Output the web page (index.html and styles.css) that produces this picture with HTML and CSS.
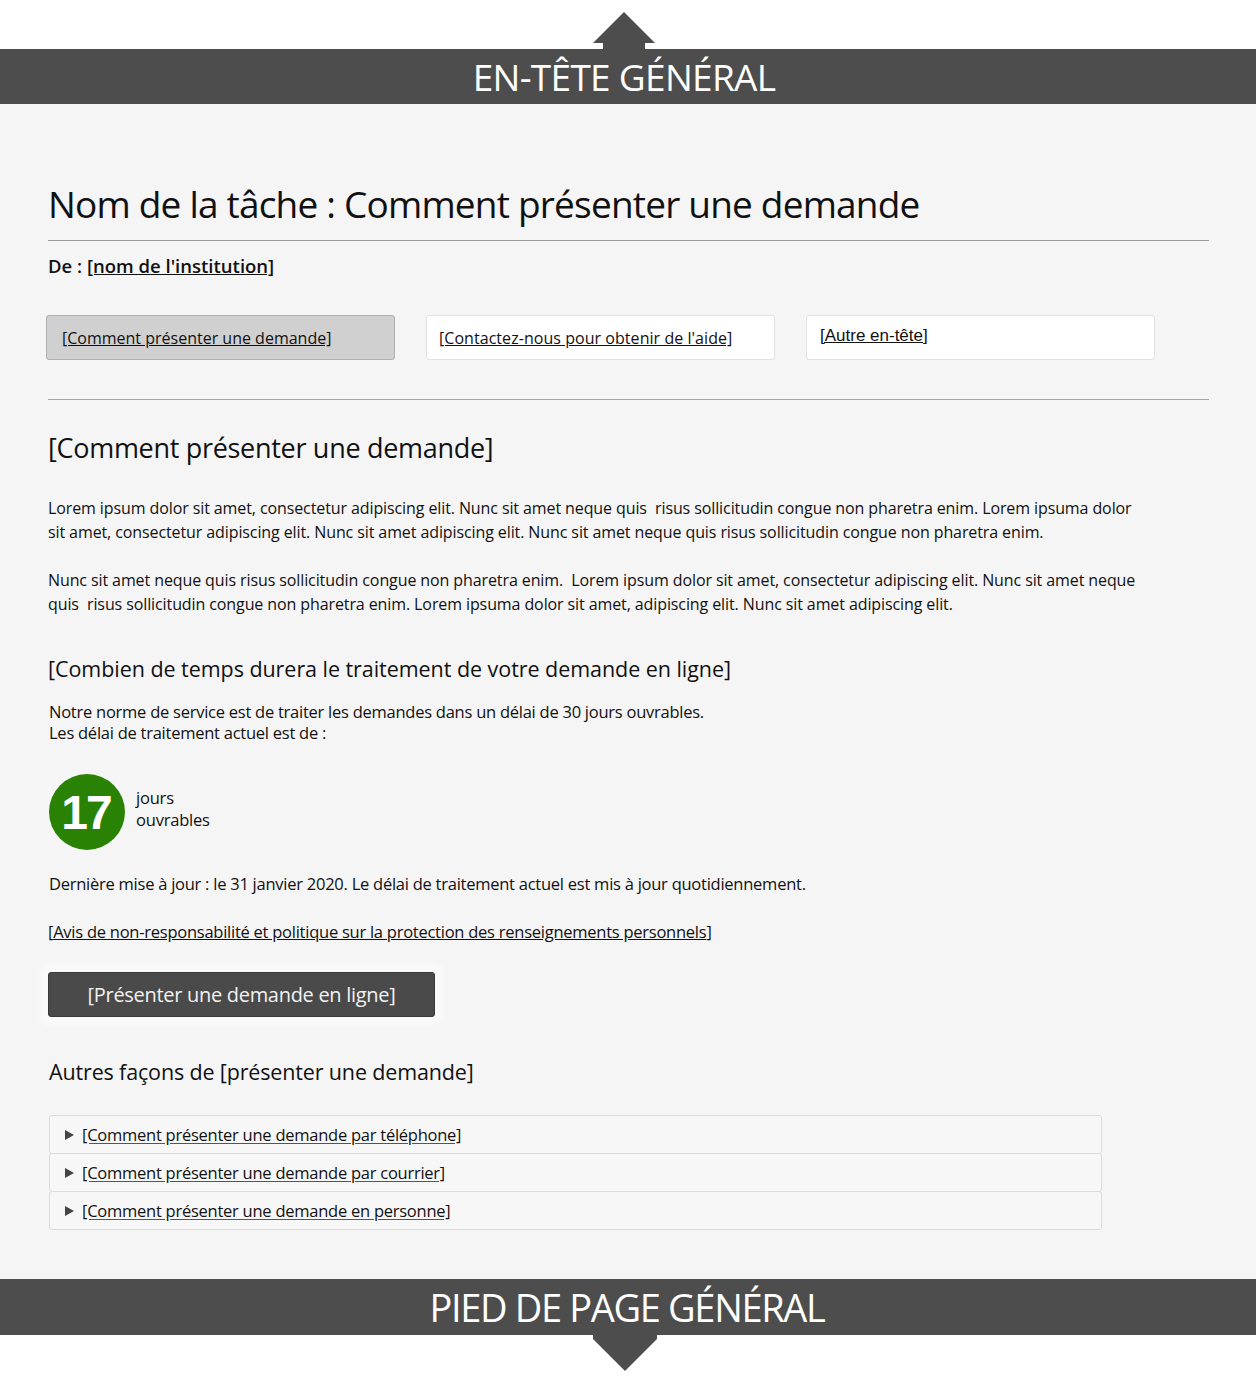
FILE: index.html
```html
<!DOCTYPE html>
<html lang="fr">
<head>
<meta charset="utf-8">
<title>Comment présenter une demande</title>
<link rel="stylesheet" href="styles.css">
</head>
<body>
<header class="site-header">
  <div class="arrow-up">
    <svg width="62" height="37" viewBox="0 0 62 37" aria-hidden="true">
      <polygon points="0,31 31,0 62,31 52,31 52,37 10,37 10,31" fill="#4d4d4d"/>
    </svg>
  </div>
  <div class="bar bar-top">EN-TÊTE GÉNÉRAL</div>
</header>

<main class="main">
  <h1 class="title">Nom de la tâche : Comment présenter une demande</h1>
  <p class="from">De : <a href="#">[nom de l'institution]</a></p>

  <nav class="tabs">
    <a class="tab active" href="#">[Comment présenter une demande]</a>
    <a class="tab tab-condensed" href="#">[Contactez-nous pour obtenir de l'aide]</a>
    <a class="tab tab-arial" href="#">[Autre en-tête]</a>
  </nav>

  <hr class="rule">

  <h2 class="section-title">[Comment présenter une demande]</h2>
  <p class="para">Lorem ipsum dolor sit amet, consectetur adipiscing elit. Nunc sit amet neque quis&nbsp; risus sollicitudin congue non pharetra enim. Lorem ipsuma dolor sit amet, consectetur adipiscing elit. Nunc sit amet adipiscing elit. Nunc sit amet neque quis risus sollicitudin congue non pharetra enim.</p>
  <p class="para">Nunc sit amet neque quis risus sollicitudin congue non pharetra enim.&nbsp; Lorem ipsum dolor sit amet, consectetur adipiscing elit. Nunc sit amet neque quis&nbsp; risus sollicitudin congue non pharetra enim. Lorem ipsuma dolor sit amet, adipiscing elit. Nunc sit amet adipiscing elit.</p>

  <h3 class="sub-title">[Combien de temps durera le traitement de votre demande en ligne]</h3>
  <p class="norm">Notre norme de service est de traiter les demandes dans un délai de 30 jours ouvrables.<br>Les délai de traitement actuel est de :</p>

  <div class="days">
    <div class="circle">17</div>
    <div class="days-label">jours<br>ouvrables</div>
  </div>

  <p class="updated">Dernière mise à jour : le 31 janvier 2020. Le délai de traitement actuel est mis à jour quotidiennement.</p>
  <p class="notice">[<a href="#">Avis de non-responsabilité et politique sur la protection des renseignements personnels</a>]</p>

  <div class="btn-wrap"><a class="btn" href="#">[Présenter une demande en ligne]</a></div>

  <h3 class="sub-title other">Autres façons de [présenter une demande]</h3>
  <div class="accordion">
    <div class="acc-row"><svg class="tri" width="9" height="10" viewBox="0 0 9 10" aria-hidden="true"><polygon points="0,0 9,5 0,10" fill="#444"/></svg><a href="#">[Comment présenter une demande par téléphone]</a></div>
    <div class="acc-row"><svg class="tri" width="9" height="10" viewBox="0 0 9 10" aria-hidden="true"><polygon points="0,0 9,5 0,10" fill="#444"/></svg><a href="#">[Comment présenter une demande par courrier]</a></div>
    <div class="acc-row"><svg class="tri" width="9" height="10" viewBox="0 0 9 10" aria-hidden="true"><polygon points="0,0 9,5 0,10" fill="#444"/></svg><a href="#">[Comment présenter une demande en personne]</a></div>
  </div>
</main>

<footer class="site-footer">
  <div class="bar bar-bottom">PIED DE PAGE GÉNÉRAL</div>
  <div class="arrow-down">
    <svg width="64" height="36" viewBox="0 0 64 36" aria-hidden="true">
      <polygon points="0,0 64,0 64,4 32,36 0,4" fill="#4d4d4d"/>
    </svg>
  </div>
</footer>
</body>
</html>
```

FILE: styles.css
```css
* { box-sizing: border-box; }
html, body { margin: 0; padding: 0; background: #ffffff; }
body {
  font-family: "Open Sans", "Noto Sans", sans-serif;
  color: #111111;
}
a { color: #111111; text-decoration: underline; }

.site-header { background: #ffffff; }
.arrow-up { height: 49px; padding: 12px 8px 0 0; display: flex; justify-content: center; }
.arrow-up svg { display: block; }
.bar {
  background: #4d4d4d;
  color: #ffffff;
  height: 55px;
  display: flex;
  align-items: center;
  justify-content: center;
  font-size: 37px;
  letter-spacing: -0.7px;
  font-weight: 400;
}
.bar-top { padding-right: 8px; }
.bar-bottom { height: 56px; font-size: 38px; letter-spacing: -1.35px; padding-right: 2px; }
.arrow-down { height: 46px; padding-right: 7px; display: flex; justify-content: center; }
.arrow-down svg { display: block; }

.main {
  background: #f5f5f5;
  padding: 76px 47px 49px 48px;
}
.title {
  margin: 0;
  font-size: 37px;
  font-weight: 400;
  line-height: 48px;
  letter-spacing: -0.8px;
  padding-bottom: 12px;
  border-bottom: 1px solid #9a9a9a;
  color: #111;
}
.from {
  margin: 13px 0 0;
  font-size: 18.5px;
  line-height: 24px;
  font-weight: 600;
  letter-spacing: 0;
}
.tabs {
  margin: 37px 0 0 -2px;
  display: flex;
  gap: 31px;
}
.tab {
  width: 349px;
  height: 45px;
  display: flex;
  align-items: center;
  padding-left: 15px;
  background: #ffffff;
  border: 1px solid #e2e2e2;
  border-radius: 3px;
  font-size: 16px;
  letter-spacing: 0;
  color: #111;
}
.tab.active { background: #d0d0d0; border-color: #b0b0b0; }
.tab-condensed { padding-left: 12px; letter-spacing: 0.05px; }
.tab-arial { font-family: "Liberation Sans", Arial, sans-serif; font-size: 17px; letter-spacing: 0; padding-left: 13px; padding-bottom: 4px; }

.rule { margin: 39px 0 0; border: 0; border-top: 1px solid #a6a6a6; height: 0; }

.section-title {
  margin: 30px 0 0;
  font-size: 27px;
  line-height: 36px;
  font-weight: 400;
  letter-spacing: -0.3px;
}
.para {
  margin: 30px 0 0;
  max-width: 1100px;
  font-size: 16px;
  line-height: 24px;
  letter-spacing: -0.1px;
}
.para + .para { margin-top: 24px; }

.sub-title {
  margin: 38px 0 0;
  font-size: 21.5px;
  line-height: 30px;
  font-weight: 400;
  letter-spacing: -0.05px;
}
.norm {
  margin: 17px 0 0 1px;
  font-size: 16.5px;
  line-height: 21px;
  letter-spacing: -0.25px;
}
.days {
  margin: 31px 0 0 1px;
  display: flex;
  align-items: flex-start;
  gap: 11px;
}
.circle {
  width: 76px;
  height: 76px;
  border-radius: 50%;
  background: #2a8204;
  color: #ffffff;
  font-family: "Liberation Sans", Arial, sans-serif;
  font-weight: 700;
  font-size: 48px;
  letter-spacing: -2px;
  display: flex;
  align-items: center;
  justify-content: center;
  padding-right: 2px;
}
.days-label {
  padding-top: 13px;
  font-size: 16.5px;
  line-height: 22px;
  letter-spacing: -0.2px;
}
.updated {
  margin: 22px 0 0 1px;
  font-size: 16.5px;
  line-height: 24px;
  letter-spacing: -0.25px;
}
.notice {
  margin: 24px 0 0;
  font-size: 16.5px;
  line-height: 24px;
  letter-spacing: -0.25px;
}
.btn-wrap { margin-top: 28px; display: flex; }
.btn {
  width: 387px;
  height: 45px;
  display: flex;
  align-items: center;
  justify-content: center;
  background: #4a4a4a;
  color: #f2f2f2;
  text-decoration: none;
  border-radius: 3px;
  border: 1px solid #3a3a3a;
  font-size: 20px;
  letter-spacing: -0.3px;
  box-shadow: 0 0 6px 8px rgba(255, 255, 255, 0.55);
}
.sub-title.other { margin-top: 40px; margin-left: 1px; letter-spacing: -0.15px; }
.accordion {
  margin: 28px 0 0 1px;
  width: 1053px;
}
.acc-row {
  height: 39px;
  display: flex;
  align-items: center;
  padding-left: 15px;
  background: #f7f7f7;
  border: 1px solid #dcdcdc;
  border-radius: 3px;
  font-size: 16.5px;
  letter-spacing: -0.25px;
}
.acc-row + .acc-row { margin-top: -1px; }
.acc-row a { text-decoration-color: #555; text-underline-offset: 2px; }
.tri { display: block; margin-right: 8px; flex: none; }
```
